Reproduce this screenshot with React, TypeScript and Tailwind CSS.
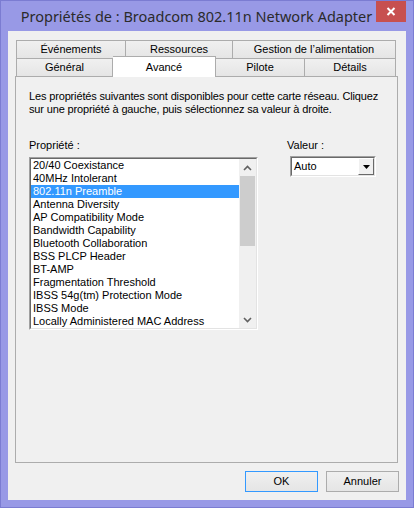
import React from 'react'

const sysFont = { fontFamily: '"Liberation Sans", Arial, sans-serif' }

const properties = [
  '20/40 Coexistance',
  '40MHz Intolerant',
  '802.11n Preamble',
  'Antenna Diversity',
  'AP Compatibility Mode',
  'Bandwidth Capability',
  'Bluetooth Collaboration',
  'BSS PLCP Header',
  'BT-AMP',
  'Fragmentation Threshold',
  'IBSS 54g(tm) Protection Mode',
  'IBSS Mode',
  'Locally Administered MAC Address'
]

function Chevron({ up }: { up?: boolean }) {
  return (
    <svg width="9" height="6" viewBox="0 0 9 6">
      <polyline
        points={up ? '1,5 4.5,1.5 8,5' : '1,1 4.5,4.5 8,1'}
        fill="none"
        stroke="#606060"
        strokeWidth="1.6"
      />
    </svg>
  )
}

function Tab({ label, w, first }: { label: string; w: string; first?: boolean }) {
  return (
    <div
      className={`${w} h-full flex items-center justify-center border-t border-r border-[#acacac] bg-gradient-to-b from-[#f0f0f0] to-[#e5e5e5] text-[11px] text-black ${first ? 'border-l' : ''}`}
    >
      {label}
    </div>
  )
}

export default function App() {
  return (
    <div
      className="w-[414px] h-[508px] flex flex-col bg-[#9899e6] border border-[#7b7cd2] overflow-hidden"
      style={sysFont}
    >
      {/* Title bar */}
      <div className="h-[30px] flex items-start">
        <div
          className="flex-1 pl-[16px] pt-[5px] text-center text-[14.5px] leading-[20px] text-[#2b2b2b]"
          style={{ fontFamily: '"Noto Sans", "Open Sans", sans-serif' }}
        >
          Propriétés de : Broadcom 802.11n Network Adapter
        </div>
        <div className="w-[30px] h-[21px] mr-[7px] bg-[#c75050] flex items-center justify-center">
          <svg width="10" height="9" viewBox="0 0 10 9">
            <path d="M1.5 1 L8.5 8 M8.5 1 L1.5 8" stroke="#fff" strokeWidth="2" />
          </svg>
        </div>
      </div>

      {/* Client area */}
      <div className="flex-1 mx-[7px] mb-[7px] bg-[#f0f0f0] flex flex-col pl-[7px] pr-[8px] pt-[9px] pb-[8px]">
        {/* Tabs */}
        <div className="ml-px flex flex-col">
          <div className="h-[18px] flex">
            <Tab label="Événements" w="w-[110px]" first />
            <Tab label="Ressources" w="w-[107px]" />
            <Tab label="Gestion de l’alimentation" w="w-[163px]" />
          </div>
          <div className="h-[18px] flex items-end">
            <Tab label="Général" w="w-[97px]" first />
            <div className="w-[103px] h-[21px] -mb-px relative z-10 bg-white border-t border-r border-[#acacac] flex justify-center pt-[2px] text-[11px] text-black">
              Avancé
            </div>
            <Tab label="Pilote" w="w-[89px]" />
            <Tab label="Détails" w="w-[91px]" />
          </div>
        </div>

        {/* Panel */}
        <div className="h-[387px] border border-[#acacac] bg-[#f0f0f0] pl-[13px] pt-[13px]">
          <p className="text-[11px] leading-[13px] text-black tracking-[-0.15px]">
            Les propriétés suivantes sont disponibles pour cette carte réseau. Cliquez
            <br />
            sur une propriété à gauche, puis sélectionnez sa valeur à droite.
          </p>

          <div className="mt-[23px] flex">
            {/* Property list */}
            <div className="w-[229px] flex flex-col">
              <div className="h-[13px] text-[11px] leading-[13px] text-black">Propriété :</div>
              <div className="mt-[5px] h-[173px] border border-t-[#a0a0a0] border-l-[#a0a0a0] border-r-white border-b-white">
                <div className="h-full border border-t-[#696969] border-l-[#696969] border-r-[#e3e3e3] border-b-[#e3e3e3] bg-white flex">
                  <div className="flex-1 flex flex-col">
                    {properties.map((p, i) => (
                      <div
                        key={p}
                        className={`h-[13px] pl-[2px] text-[11px] leading-[13px] whitespace-nowrap ${
                          i === 2 ? 'bg-[#3399ff] text-white' : 'text-black'
                        }`}
                      >
                        {p}
                      </div>
                    ))}
                  </div>
                  {/* Scrollbar */}
                  <div className="w-[17px] bg-[#f0f0f0] flex flex-col">
                    <div className="h-[17px] flex items-center justify-center">
                      <Chevron up />
                    </div>
                    <div className="h-[70px] mx-px bg-[#cdcdcd]" />
                    <div className="flex-1" />
                    <div className="h-[17px] flex items-center justify-center">
                      <Chevron />
                    </div>
                  </div>
                </div>
              </div>
            </div>

            {/* Value */}
            <div className="ml-[29px] flex flex-col">
              <div className="h-[13px] text-[11px] leading-[13px] text-black">Valeur :</div>
              <div className="mt-[4px] ml-[3px] w-[86px] h-[21px] border border-t-[#a0a0a0] border-l-[#a0a0a0] border-r-white border-b-white">
                <div className="h-full border border-t-[#696969] border-l-[#696969] border-r-[#e3e3e3] border-b-[#e3e3e3] bg-white flex items-center">
                  <div className="flex-1 pl-[2px] text-[11px] leading-[13px] text-black">Auto</div>
                  <div className="w-[16px] h-full border border-t-white border-l-white border-r-[#696969] border-b-[#696969] bg-[#f0f0f0] flex items-center justify-center">
                    <svg width="7" height="4" viewBox="0 0 7 4">
                      <path d="M0 0 H7 L3.5 4 Z" fill="#000" />
                    </svg>
                  </div>
                </div>
              </div>
            </div>
          </div>
        </div>

        {/* Buttons */}
        <div className="mt-[8px] flex justify-end gap-[8px] -mr-px">
          <button className="w-[73px] h-[21px] border border-[#3399ff] bg-gradient-to-b from-[#f0f0f0] to-[#e5e5e5] text-[11px] text-black">
            OK
          </button>
          <button className="w-[73px] h-[21px] border border-[#acacac] bg-gradient-to-b from-[#f0f0f0] to-[#e5e5e5] text-[11px] text-black">
            Annuler
          </button>
        </div>
      </div>
    </div>
  )
}
